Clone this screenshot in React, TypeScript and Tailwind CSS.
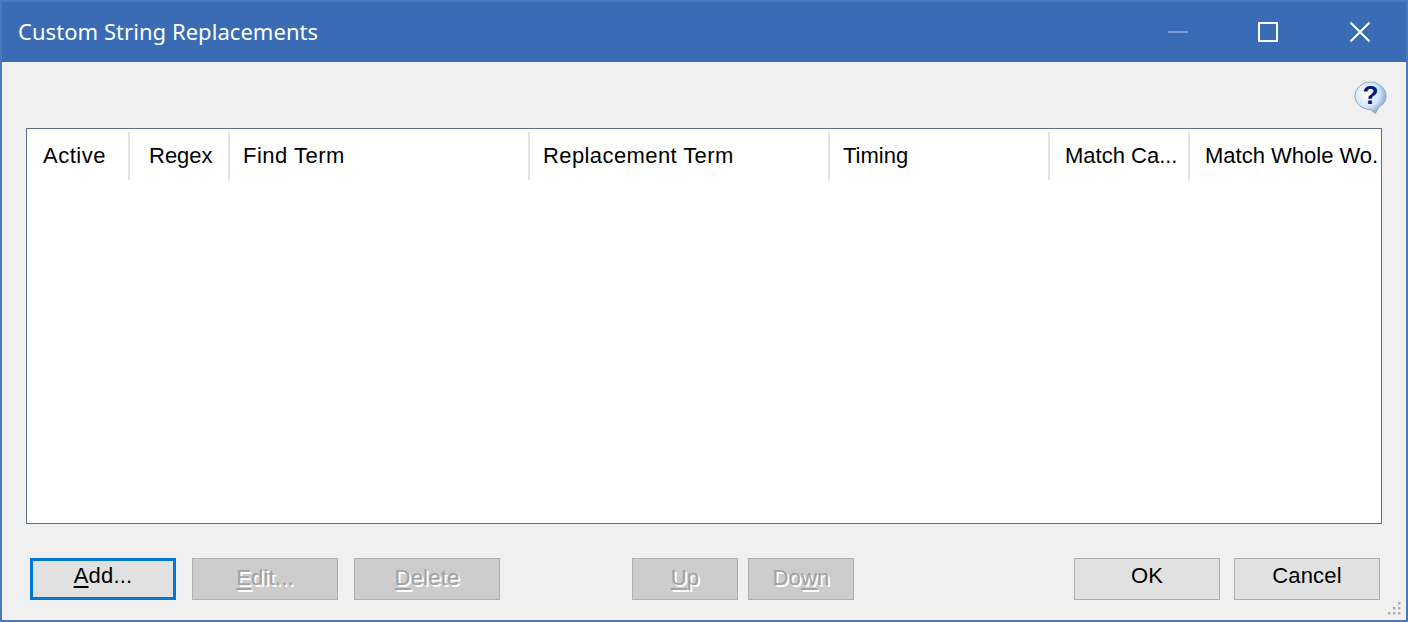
import React from 'react';

const columns = [
  { label: 'Active', cls: 'w-[103px] pl-[16px] tracking-[0.5px]' },
  { label: 'Regex', cls: 'w-[100px] pl-[19px]' },
  { label: 'Find Term', cls: 'w-[300px] pl-[13px] tracking-[0.5px]' },
  { label: 'Replacement Term', cls: 'w-[300px] pl-[13px] tracking-[0.4px]' },
  { label: 'Timing', cls: 'w-[220px] pl-[13px]' },
  { label: 'Match Ca...', cls: 'w-[140px] pl-[15px]' },
  { label: 'Match Whole Wo.', cls: 'flex-1 pl-[15px]' },
];

function DialogButton({
  before,
  accel,
  rest,
  disabled,
  focused,
  width,
}: {
  before?: string;
  accel?: string;
  rest: string;
  disabled?: boolean;
  focused?: boolean;
  width: string;
}) {
  let look = 'border border-[#adadad] bg-[#e1e1e1] text-black pb-[7px]';
  if (focused) look = 'border-[3px] border-[#0078d7] bg-[#e1e1e1] text-black pb-[7px]';
  if (disabled) look = 'border border-[#b0b0b0] bg-[#cccccc] text-[#a3a3a3] pb-[3px] [text-shadow:2px_2px_0_#ffffff]';
  return (
    <button type="button" className={`h-[42px] ${width} flex items-center justify-center text-[22px] tracking-[0.2px] leading-none ${look}`}>
      <span>
        {before}
        {accel && <span className="underline underline-offset-[3px]">{accel}</span>}
        {rest}
      </span>
    </button>
  );
}

export default function App() {
  return (
    <div className="w-[1408px] h-[622px] flex flex-col border-2 border-[#4a78bd] bg-[#3a6cb5] font-['Liberation_Sans',sans-serif] overflow-hidden">
      {/* Title bar */}
      <div className="h-[60px] shrink-0 flex items-center pl-[16px] text-white">
        <span className="text-[22px] tracking-[0.05px] pb-[2px] font-['Noto_Sans',sans-serif] leading-none">Custom String Replacements</span>
        <div className="ml-auto flex items-center h-full">
          <svg width="20" height="2" viewBox="0 0 20 2" className="mr-[70px]">
            <rect width="20" height="2" fill="#7d9fd0" />
          </svg>
          <svg width="20" height="20" viewBox="0 0 20 20" className="mr-[72px]">
            <rect x="1" y="1" width="18" height="18" fill="none" stroke="#ffffff" strokeWidth="2" />
          </svg>
          <svg width="20" height="20" viewBox="0 0 20 20" className="mr-[36px]">
            <path d="M0.5 0.5 L19.5 19.5 M19.5 0.5 L0.5 19.5" stroke="#ffffff" strokeWidth="2" />
          </svg>
        </div>
      </div>

      {/* Dialog body */}
      <div className="flex-1 bg-[#f0f0f0] flex flex-col relative">
        <div className="h-[66px] shrink-0 flex items-start justify-end pt-[19px] pr-[19px]">
          <svg width="33" height="33" viewBox="0 0 34 34">
            <defs>
              <radialGradient id="bubble" cx="38%" cy="38%" r="72%">
                <stop offset="0%" stopColor="#ffffff" />
                <stop offset="55%" stopColor="#d4e6f8" />
                <stop offset="100%" stopColor="#6f97c4" />
              </radialGradient>
            </defs>
            <path
              d="M17 1 C25 1 33 7 33 15.5 C33 21 29.5 25 25.5 27 L22 33.5 L17 29.5 C8.5 29.5 1 23 1 15.5 C1 7 9 1 17 1 Z"
              fill="url(#bubble)"
              stroke="#8ea6bd"
              strokeWidth="1"
            />
            <text x="17" y="24" textAnchor="middle" fontSize="27" fontWeight="700" fontFamily="Liberation Sans, sans-serif" fill="#06157f">
              ?
            </text>
          </svg>
        </div>

        {/* List */}
        <div className="mx-[24px] h-[396px] shrink-0 bg-white border border-[#5f6f8a] flex items-start pt-[3px]">
          {columns.map((col, i) => (
            <div
              key={col.label}
              className={`h-[48px] flex items-center text-[22px] leading-none text-black whitespace-nowrap ${col.cls} ${i < columns.length - 1 ? 'border-r-2 border-[#e3e3e3]' : ''}`}
            >
              {col.label}
            </div>
          ))}
        </div>

        {/* Buttons */}
        <div className="mt-[34px] ml-[28px] mr-[26px] flex items-center">
          <DialogButton accel="A" rest="dd..." focused width="w-[146px]" />
          <div className="ml-[16px]"><DialogButton accel="E" rest="dit..." disabled width="w-[146px]" /></div>
          <div className="ml-[16px]"><DialogButton accel="D" rest="elete" disabled width="w-[146px]" /></div>
          <div className="ml-[132px]"><DialogButton accel="U" rest="p" disabled width="w-[106px]" /></div>
          <div className="ml-[10px]"><DialogButton before="Do" accel="w" rest="n" disabled width="w-[106px]" /></div>
          <div className="ml-auto"><DialogButton rest="OK" width="w-[146px]" /></div>
          <div className="ml-[14px]"><DialogButton rest="Cancel" width="w-[146px]" /></div>
        </div>

        {/* Size grip */}
        <svg width="16" height="16" viewBox="0 0 16 16" className="absolute right-[4px] bottom-[4px]">
          <g fill="#b0b0b0">
            <rect x="12" y="2" width="2.5" height="2.5" />
            <rect x="7" y="7" width="2.5" height="2.5" />
            <rect x="12" y="7" width="2.5" height="2.5" />
            <rect x="2" y="12" width="2.5" height="2.5" />
            <rect x="7" y="12" width="2.5" height="2.5" />
            <rect x="12" y="12" width="2.5" height="2.5" />
          </g>
        </svg>
      </div>
    </div>
  );
}
